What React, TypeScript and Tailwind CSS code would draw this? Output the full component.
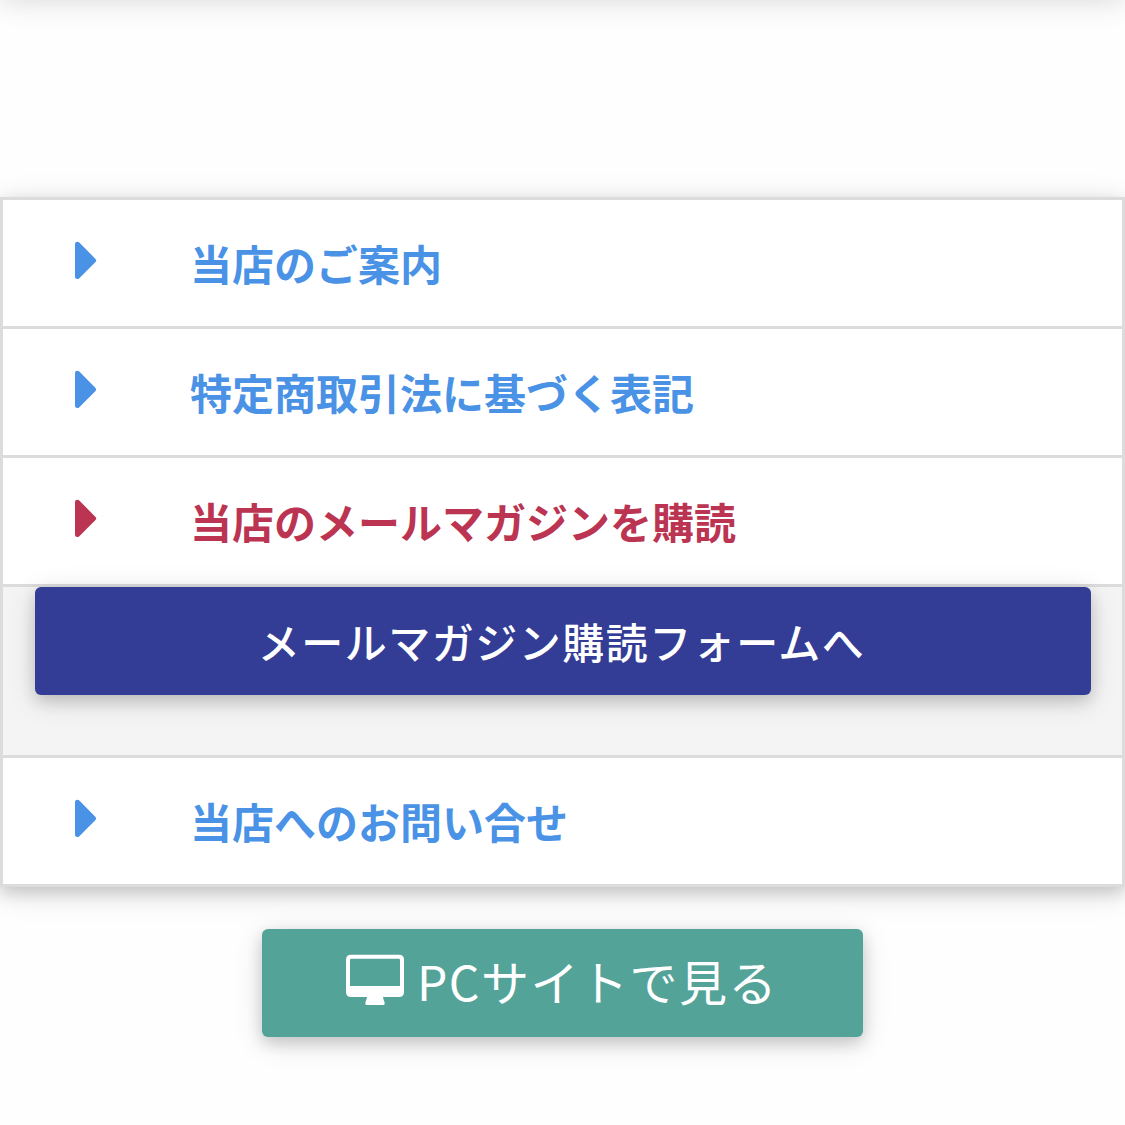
const shadow = "shadow-[0_6px_15px_0_rgba(0,0,0,0.16),0_6px_30px_0_rgba(0,0,0,0.12)]";

function Caret() {
  return (
    <svg width="22" height="40" viewBox="0 0 22 40" className="shrink-0" fill="currentColor">
      <path d="M0 4Q0 1.700 2.300 1.700Q3.400 1.700 4.300 2.600L20.500 18.900Q22 20.400 20.500 21.900L4.300 38.200Q3.400 39.100 2.300 39.100Q0 39.100 0 36.800Z" />
    </svg>
  );
}

function Row({ text, active = false }: { text: string; active?: boolean }) {
  return (
    <div className={`flex h-[129px] border-b-3 border-[#dcdcdc] bg-white pl-[72px] pt-10 ${active ? "text-[#bb3553]" : "text-[#4a92e6]"}`}>
      <Caret />
      <span className="-mt-0.5 ml-[93px] text-[42px] font-bold leading-[50px] whitespace-nowrap">{text}</span>
    </div>
  );
}

export default function App() {
  return (
    <div className='h-[1125px] overflow-hidden bg-[#fefefe] font-["Noto_Sans_CJK_JP",sans-serif]'>
      <div className="-mt-10 h-10 shadow-[0_0_30px_rgba(0,0,0,0.16)]" />
      <div className={`mt-[197px] h-[690px] border-3 border-b-0 border-[#dcdcdc] ${shadow}`}>
        <Row text="当店のご案内" />
        <Row text="特定商取引法に基づく表記" />
        <Row text="当店のメールマガジンを購読" active />
        <div className="h-[171px] border-b-3 border-[#dcdcdc] bg-[#f4f4f4] pl-8 pr-[31px]">
          <button className={`flex h-[108px] w-full items-center justify-center rounded-md bg-[#333d96] pb-px pr-[3px] text-[42px] font-medium tracking-[1.5px] text-white ${shadow}`}>
            メールマガジン購読フォームへ
          </button>
        </div>
        <Row text="当店へのお問い合せ" />
      </div>
      <button className={`mx-auto mt-[42px] flex h-[108px] w-[601px] items-center justify-center rounded-md bg-[#53a399] pb-1.5 pr-0.5 text-[48px] tracking-[1.5px] text-white ${shadow}`}>
        <svg width="60" height="54" viewBox="0 0 60 54" fill="currentColor" className="mr-3">
          <path
            fillRule="evenodd"
            d="M6 1.700H54Q59 1.700 59 6.700V39Q59 44 54 44H38Q38.500 47 39.600 49.400Q40.200 52 37.500 52H22.500Q19.800 52 20.400 49.400Q21.500 47 22 44H6Q1 44 1 39V6.700Q1 1.700 6 1.700ZM6.300 5.700Q5 5.700 5 7V33H55V7Q55 5.700 53.700 5.700Z"
          />
        </svg>
        <span>PCサイトで見る</span>
      </button>
    </div>
  );
}
